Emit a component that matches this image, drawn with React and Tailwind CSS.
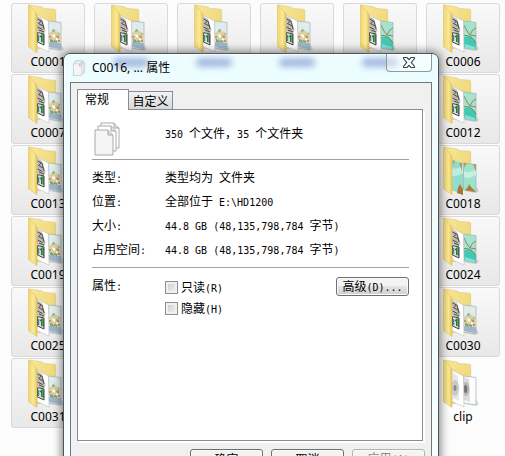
import { useId } from 'react'

const UI_FONT = "font-['Noto_Sans','Noto_Sans_CJK_SC',sans-serif]"

// [front sheet, back sheet] shown inside each folder
const SHEETS = { 5: ['doc', 'teal'], 6: ['doc', 'teal'], 12: ['doc', 'teal'], 18: ['sea', 'sea'], 24: ['doc', 'teal'] }

const folders = Array.from({ length: 35 }, (_, i) => ({
  name: `C${String(i + 1).padStart(4, '0')}`,
  sheets: SHEETS[i + 1] || ['doc', 'photo'],
  selected: true,
}))
folders.push({ name: 'clip', sheets: ['disc', 'disc'], selected: false })

const details = [
  ['类型:', '类型均为 文件夹'],
  ['位置:', '全部位于 E:\\HD1200'],
  ['大小:', '44.8 GB (48,135,798,784 字节)'],
  ['占用空间:', '44.8 GB (48,135,798,784 字节)'],
]

function FrontSheet({ kind }) {
  if (kind === 'sea') {
    return (
      <g>
        <polygon points="9,14 20,17 20,49 9,44" fill="#93dccd" />
        <path d="M9 22q6 2 11-3v8q-5 4-11 3z" fill="#bdebde" />
        <path d="M14 47l1-5 2-4 2 4 1 1v6z" fill="#a8763a" />
        <path d="M19 17v8l-3-8zM10 14l2 1-2 5z" fill="#b99a5c" />
      </g>
    )
  }
  return (
    <g>
      <polygon points="9,11 20.500,17 21,48 9,42.500" fill="#fff" stroke="#bdbdbd" strokeWidth=".6" />
      {kind === 'doc' ? (
        <g>
          <path d="M9 12l5 3 3.500 11-1.500 4-7-3z" fill="#bfbdb9" />
          <path d="M9.500 15l4 2-3 2.500 4.500 2.500M14 17l2 8M9.500 23l5 2.500M11 26l5 2" stroke="#4f4d4b" fill="none" />
          <path d="M9.500 28.500l6.500 1.500v11L9.500 38z" fill="#d9dedb" stroke="#3e403f" />
          <path d="M12 33l1.800-1.500V38" stroke="#138a26" strokeWidth="1.600" fill="none" />
          <path d="M10.500 31v6" stroke="#4f7dae" strokeWidth="1.400" />
          <path d="M15.300 31v8" stroke="#4a4c4b" strokeWidth=".9" />
        </g>
      ) : (
        <g>
          <polygon points="9,13 15,17 16,42 9,39" fill="#e6e6e8" />
          <ellipse cx="12" cy="29" rx="4" ry="8" fill="#cacacc" />
          <ellipse cx="12" cy="29" rx="1.500" ry="3" fill="#8a8a8e" />
        </g>
      )}
    </g>
  )
}

function BackSheet({ kind }) {
  const fill = { photo: '#dfebec', teal: '#a5e3d0', sea: '#9ce3cd', disc: '#fdfdfd' }[kind]
  return (
    <g>
      <polygon points="20.500,17 33,18.500 33,46 20.500,44" fill={fill} stroke="#a3b0b2" strokeWidth=".7" />
      {kind === 'photo' && (
        <g>
          <path d="M21 38l12 1v6.500L21 43z" fill="#9fb6ca" />
          <path d="M21 29l3-2 2-3 2 3 4.500 2v9l-6 1-5.500-3z" fill="#d9d1a6" />
          <path d="M21 32h2v2h-2zM28 31l3 1v2h-2zM30 36h2v2h-2z" fill="#cf8f50" />
          <path d="M22 35l3 1 1 3-4-1zM25 25l2 2-3 1zM26 36l3 1v2l-3-1zM30 29l2 1-1 1z" fill="#7aa57d" />
          <path d="M24 30l3 1v3l-2-1zM28 34l2 1v1h-2z" fill="#fff" />
        </g>
      )}
      {kind === 'teal' && (
        <g>
          <path d="M21 33q7-3 12 5v7.500L21 43z" fill="#43c9b2" />
          <path d="M22 40l10 3v2.500l-10-2z" fill="#84e0d2" />
          <path d="M21 31.500q8-1 12 8M21 21q3 7 6 10 2-6 6-7M27 31l6 1" stroke="#8d7d50" strokeWidth=".9" fill="none" />
        </g>
      )}
      {kind === 'sea' && (
        <g>
          <path d="M21 25q7 3 12-2v6q-6 4-12 2z" fill="#c7f0df" />
          <path d="M22 44l3-3 1-3 2 3 4 4v1z" fill="#b07a35" />
          <path d="M21 17h3l-3 5zM33 18v8l-3-8z" fill="#b99a5c" />
        </g>
      )}
      {kind === 'disc' && (
        <g>
          <polygon points="21,18 26,20 27,43 21,41" fill="#dcdcde" />
          <ellipse cx="23" cy="30" rx="3.500" ry="7" fill="#b9b9bc" />
          <ellipse cx="22.500" cy="30" rx="1.800" ry="4" fill="#717176" />
        </g>
      )}
    </g>
  )
}

function FolderIcon({ sheets }) {
  const id = useId()
  return (
    <svg className="h-[50px] w-10" viewBox="0 0 40 50" aria-hidden="true">
      <defs>
        <linearGradient id={`${id}b`} x1="0" y1="0" x2="1" y2="1">
          <stop offset="0" stopColor="#f8e89a" />
          <stop offset="1" stopColor="#ecd06c" />
        </linearGradient>
        <linearGradient id={`${id}f`} x1="0" y1="0" x2="1" y2="0">
          <stop offset="0" stopColor="#efd470" />
          <stop offset=".6" stopColor="#fae996" />
          <stop offset="1" stopColor="#e6c85c" />
        </linearGradient>
      </defs>
      <path d="M21 45l12 2 3-2-3-5z" fill="#000" opacity=".12" />
      <path d="M1 1l13 2 2 1.500 10.500.7q1.200.1 1.200 1.300V40L9 45z" fill={`url(#${id}b)`} stroke="#d9c06c" strokeWidth=".5" />
      <BackSheet kind={sheets[1]} />
      <FrontSheet kind={sheets[0]} />
      <path d="M.3 1.500Q.5.500 1.500 1.200L9 10v38.500L.3 42.500z" fill={`url(#${id}f)`} stroke="#d8bb58" strokeWidth=".5" />
    </svg>
  )
}

function PagesIcon({ className }) {
  return (
    <svg className={className} viewBox="0 0 28 34" aria-hidden="true">
      {[[8, 1], [5, 4], [2, 8]].map(([x, y], i) => (
        <g key={i} transform={`translate(${x} ${y})`}>
          <path d="M0 0h13l5 5v20H0z" fill={i === 2 ? '#f5f5f5' : '#fff'} stroke="#a9a9a9" />
          <path d="M13 0v5h5" fill="#dedede" stroke="#a9a9a9" />
        </g>
      ))}
    </svg>
  )
}

// Half-width runs take exactly half of a 12px full-width character
function Mixed({ children }) {
  return children.split(/([\x20-\x7e]+)/).map((run, i) =>
    i % 2 ? <span key={i} className="whitespace-pre font-['DejaVu_Sans_Mono',monospace] text-[10px]">{run}</span> : run
  )
}

function PushButton({ children, disabled }) {
  return (
    <button type="button" disabled={disabled}
      className="h-[19px] w-[73px] shrink-0 rounded-[3px] border border-[#707070] bg-linear-to-b from-[#f3f3f3] from-45% via-[#e4e4e4] via-50% to-[#cfcfcf] leading-4 shadow-[inset_0_0_0_1px_#fafafa] disabled:border-[#b4b4b4] disabled:from-[#f4f4f4] disabled:via-[#f4f4f4] disabled:to-[#f4f4f4] disabled:text-[#8a8a8a]">
      <Mixed>{children}</Mixed>
    </button>
  )
}

function CheckRow({ id, children }) {
  return (
    <div className="flex h-[21px] items-center gap-[3px]">
      <input id={id} type="checkbox"
        className="size-[13px] appearance-none border border-[#8e8f8f] bg-linear-to-br from-[#c3c8d0] to-[#f6f6f6] shadow-[inset_0_0_0_2px_#f0f0f0] checked:bg-[#4b6fa5]" />
      <label htmlFor={id}><Mixed>{children}</Mixed></label>
    </div>
  )
}

function TitleBar() {
  return (
    <header className="relative flex h-7 items-center pl-2">
      {/* desktop labels showing through the glass */}
      <div className="absolute inset-y-0 left-[49px] flex gap-[47px]" aria-hidden="true">
        {[0, 1, 2, 3].map((n) => (
          <span key={n} className="mt-1 h-[9px] w-9 rounded-full bg-[#a4b8de] blur-[3px]" />
        ))}
      </div>
      <PagesIcon className="relative h-4 w-[14px]" />
      <h1 className={`relative ml-[6px] text-xs text-black ${UI_FONT}`}>C0016, ... 属性</h1>
      <button type="button" aria-label="关闭"
        className="absolute right-[6px] top-0 flex h-[18px] w-[46px] items-center justify-center rounded-b-[4px] border border-t-0 border-[#8f9a9b] bg-white/40">
        <svg className="h-[11px] w-3" viewBox="0 0 12 11" aria-hidden="true">
          <path d="M.5.500h3.500L6 2.700 8 .5h3.500v1L8.300 5.500l3.200 4v1H8L6 8.300 4 10.500H.5v-1l3.200-4L.5 1.500z" fill="#fff" stroke="#3f4652" strokeWidth="1.200" />
        </svg>
      </button>
    </header>
  )
}

function PropertiesDialog() {
  return (
    <section className="absolute left-[63px] right-[66px] top-[53px] rounded-t-[7px] border border-[#4d5556] bg-linear-to-b from-[#ecfdff] to-[#f6ffff] px-[6px] pb-[7px] shadow-[0_0_9px_2px_rgba(0,0,0,0.45),inset_0_0_0_1px_#fff]">
      <div className="-mx-[6px]"><TitleBar /></div>
      <div className="border border-[#6f7778] bg-[#f0f0f0] px-[6px] pb-2 pt-[6px] font-['Noto_Sans_CJK_SC',sans-serif] text-xs leading-4 text-black">
        <div className="flex items-end" role="tablist">
          <button type="button" role="tab" aria-selected="true"
            className="relative z-10 -mb-px h-[21px] w-[52px] border border-b-0 border-[#898c95] bg-white pb-[2px] pr-3 leading-4">常规</button>
          <button type="button" role="tab" aria-selected="false"
            className="h-[18px] w-11 border border-b-0 border-l-0 border-[#898c95] bg-linear-to-b from-[#f2f2f2] to-[#d8d8d8] leading-4">自定义</button>
        </div>
        <div className="mr-[2px] h-[332px] border border-[#898c95] bg-white pl-[14px] pr-[13px] pt-3 shadow-[2px_2px_0_#fff]" role="tabpanel">
          <div className="flex h-[37px] items-start">
            <div className="w-[73px] shrink-0 pl-px"><PagesIcon className="h-[34px] w-7" /></div>
            <p className="pt-[3px]"><Mixed>350 个文件，35 个文件夹</Mixed></p>
          </div>
          <dl className="border-y border-[#a0a0a0] pb-[5px] pt-[6px]">
            {details.map(([label, value]) => (
              <div key={label} className="flex h-6 items-center">
                <dt className="w-[73px] shrink-0"><Mixed>{label}</Mixed></dt>
                <dd className="whitespace-nowrap"><Mixed>{value}</Mixed></dd>
              </div>
            ))}
          </dl>
          <div className="flex items-start pt-[9px]">
            <span className="w-[73px] shrink-0"><Mixed>属性:</Mixed></span>
            <div className="flex-1">
              <CheckRow id="readonly">只读(R)</CheckRow>
              <CheckRow id="hidden">隐藏(H)</CheckRow>
            </div>
            <PushButton>高级(D)...</PushButton>
          </div>
        </div>
        <div className="flex justify-end gap-2 pt-2">
          <PushButton>确定</PushButton>
          <PushButton>取消</PushButton>
          <PushButton disabled>应用(A)</PushButton>
        </div>
      </div>
    </section>
  )
}

export default function App() {
  return (
    <main className="relative h-screen overflow-hidden bg-[#fcfcfc]">
      <ul className="grid grid-cols-6 gap-x-[9px] gap-y-px pl-[11px] pr-[5px] pt-[3px]">
        {folders.map(({ name, sheets, selected }) => (
          <li key={name}
            className={`flex h-[70px] flex-col items-center rounded-[3px] border text-xs leading-4 text-black ${UI_FONT} ${selected ? 'border-[#d9d9d9] bg-linear-to-b from-[#f9f9f9] to-[#e8e8e8]' : 'border-transparent'}`}>
            <FolderIcon sheets={sheets} />
            <span>{name}</span>
          </li>
        ))}
      </ul>
      <PropertiesDialog />
    </main>
  )
}
